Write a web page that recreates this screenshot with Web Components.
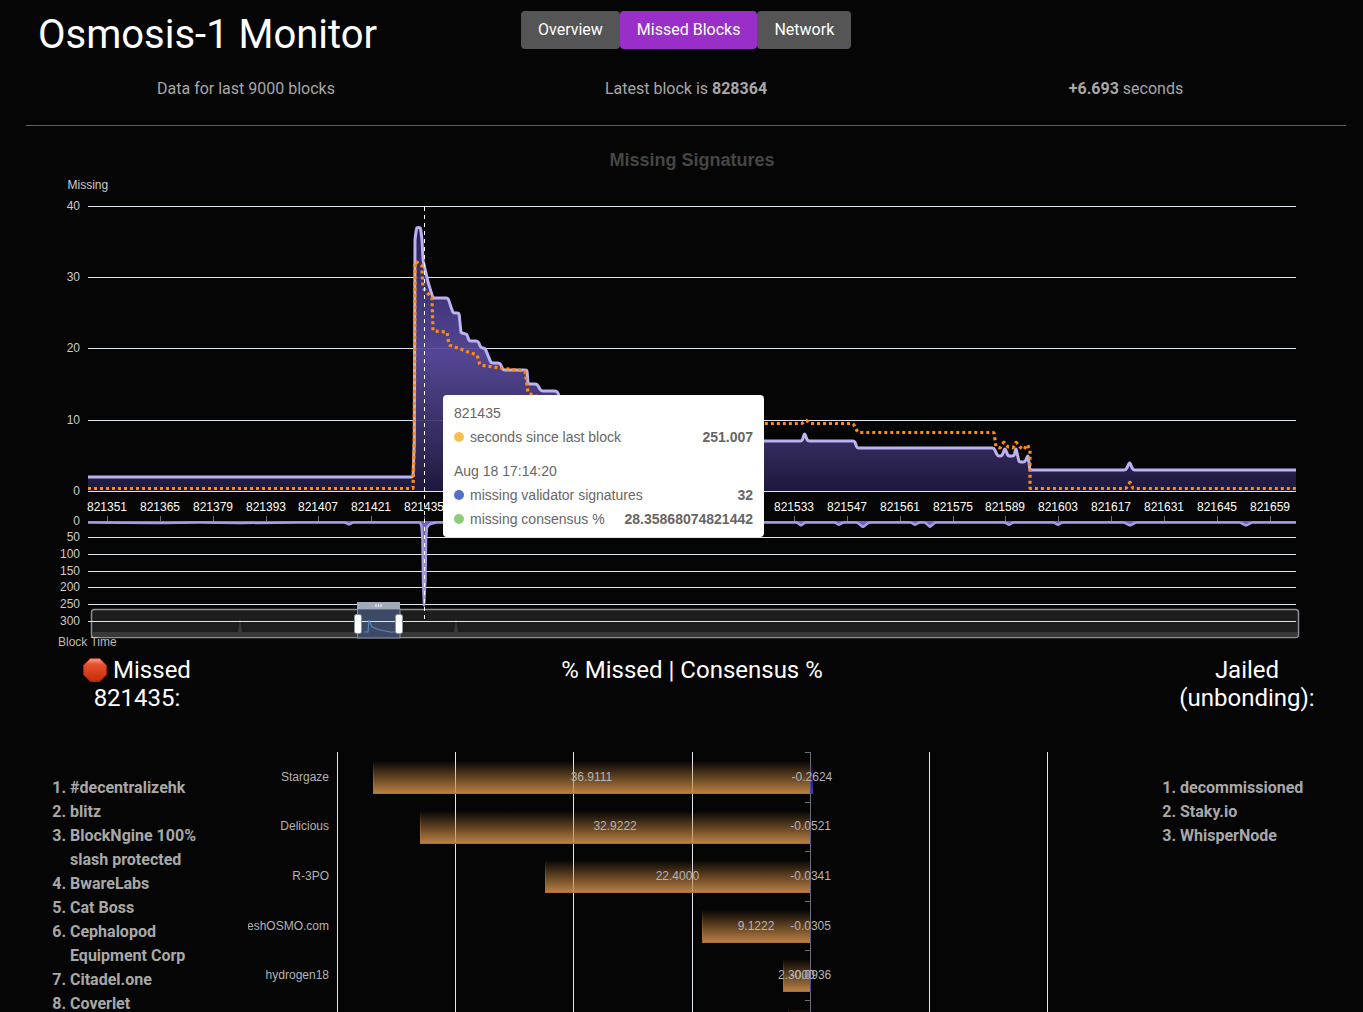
<!DOCTYPE html>
<html>
<head>
<meta charset="utf-8">
<title>Osmosis-1 Monitor</title>
<style>
    html, body { margin: 0; height: 100%; overflow: hidden; background: #050505; }
    body { font-family: Roboto, "Liberation Sans", sans-serif; }
</style>
</head>
<body>
<monitor-header heading="Osmosis-1 Monitor">
    <tab-button>Overview</tab-button>
    <tab-button active>Missed Blocks</tab-button>
    <tab-button>Network</tab-button>
</monitor-header>
<stat-row>
    <span>Data for last 9000 blocks</span>
    <span>Latest block is <b>828364</b></span>
    <span><b>+6.693</b> seconds</span>
</stat-row>
<signature-chart>
    <chart-tooltip>
        <div class="head">821435</div>
        <tip-row color="#f6c04f" value="251.007">seconds since last block</tip-row>
        <div class="head second">Aug 18 17:14:20</div>
        <tip-row color="#5470c6" value="32">missing validator signatures</tip-row>
        <tip-row color="#91cc75" value="28.35868074821442">missing consensus %</tip-row>
    </chart-tooltip>
</signature-chart>
<missed-panel>
    <column-heading slot="left"><stop-icon></stop-icon> Missed 821435:</column-heading>
    <validator-list slot="left" indent="44" names="#decentralizehk|blitz|BlockNgine 100% slash protected|BwareLabs|Cat Boss|Cephalopod Equipment Corp|Citadel.one|Coverlet"></validator-list>
    <column-heading slot="middle">% Missed | Consensus %</column-heading>
    <consensus-bars slot="middle"></consensus-bars>
    <column-heading slot="right">Jailed (unbonding):</column-heading>
    <validator-list slot="right" indent="32" names="decommissioned|Staky.io|WhisperNode"></validator-list>
</missed-panel>

<script>
const SVG_FONT = '"Liberation Sans", Arial, sans-serif';

function roundPath(pts, r = 2) {
    let d = `M${pts[0][0]} ${pts[0][1]}`;
    for (let i = 1; i < pts.length - 1; i++) {
        const [x, y] = pts[i];
        const [px, py] = pts[i - 1];
        const [nx, ny] = pts[i + 1];
        const l1 = Math.hypot(x - px, y - py) || 1;
        const l2 = Math.hypot(nx - x, ny - y) || 1;
        const a = Math.min(r, l1 / 2), b = Math.min(r, l2 / 2);
        d += `L${(x - (x - px) * a / l1).toFixed(1)} ${(y - (y - py) * a / l1).toFixed(1)}`;
        d += `Q${x} ${y} ${(x + (nx - x) * b / l2).toFixed(1)} ${(y + (ny - y) * b / l2).toFixed(1)}`;
    }
    const last = pts[pts.length - 1];
    return d + `L${last[0]} ${last[1]}`;
}

class MonitorHeader extends HTMLElement {
    connectedCallback() {
        this.attachShadow({ mode: 'open' });
        this.shadowRoot.innerHTML = `
            <style>
                :host { display: flex; height: 60px; padding-left: 38px; box-sizing: border-box; }
                h1 { flex: 0 0 483px; margin: 0; font: 400 40px/70px Roboto, sans-serif; color: #fff; }
                div { display: flex; padding-top: 11px; height: 38px; }
            </style>
            <h1>${this.getAttribute("heading")}</h1>
            <div><slot></slot></div>
        `;
    }
}
customElements.define('monitor-header', MonitorHeader);

class TabButton extends HTMLElement {
    connectedCallback() {
        this.attachShadow({ mode: 'open' });
        this.shadowRoot.innerHTML = `
            <style>
                :host {
                    display: block; height: 38px; padding: 0 17px; border-radius: 4px;
                    background: #555; color: #fff;
                    font: 400 16px/38px Roboto, sans-serif;
                }
                :host([active]) { background: #9a2ec8; }
            </style>
            <slot></slot>
        `;
    }
}
customElements.define('tab-button', TabButton);

class StatRow extends HTMLElement {
    connectedCallback() {
        this.attachShadow({ mode: 'open' });
        this.shadowRoot.innerHTML = `
            <style>
                :host {
                    display: grid; grid-template-columns: repeat(3, 1fr); text-align: center;
                    margin: 0 17px 0 26px; height: 66px; padding-top: 17px; box-sizing: border-box;
                    border-bottom: 1px solid #8f38b4;
                    color: #a8a8a8; font: 400 16px/24px Roboto, sans-serif;
                }
                ::slotted(*) { display: block; }
            </style>
            <slot></slot>
        `;
    }
}
customElements.define('stat-row', StatRow);

class ChartTooltip extends HTMLElement {
    connectedCallback() {
        this.attachShadow({ mode: 'open' });
        this.shadowRoot.innerHTML = `
            <style>
                :host {
                    position: absolute; left: 443px; top: 269px; width: 321px; height: 142px;
                    box-sizing: border-box; padding: 9px 11px; background: #fff; border-radius: 4px;
                    color: #666; font: 14px/18px "Liberation Sans", Arial, sans-serif;
                }
                ::slotted(.head) { display: block; height: 18px; margin-bottom: 6px; }
                ::slotted(.second) { margin-top: 16px; }
            </style>
            <slot></slot>
        `;
    }
}
customElements.define('chart-tooltip', ChartTooltip);

class TipRow extends HTMLElement {
    connectedCallback() {
        this.attachShadow({ mode: 'open' });
        this.shadowRoot.innerHTML = `
            <style>
                :host { display: flex; align-items: center; height: 18px; margin-bottom: 6px; }
                i { width: 10px; height: 10px; border-radius: 50%; margin-right: 6px; background: ${this.getAttribute("color")}; }
                b { margin-left: auto; }
            </style>
            <i></i><slot></slot><b>${this.getAttribute("value")}</b>
        `;
    }
}
customElements.define('tip-row', TipRow);

class SignatureChart extends HTMLElement {
    connectedCallback() {
        const left = [[88, 477], [413, 477], [414.3, 440], [415, 240], [416.5, 227.5], [420.5, 227.5], [422, 240], [423, 260], [428, 282],
            [433, 298], [448, 298], [453, 313], [459, 313], [461, 333], [467, 334], [469, 341], [478, 341], [481, 348], [485, 348],
            [491, 363], [500, 363], [503, 370], [527, 370], [528, 384], [537, 384], [541, 391], [557, 391], [560, 398],
            [620, 420], [764, 441], [802, 441], [804.6, 433], [807.5, 441], [854.6, 441], [857, 448], [994, 448], [997.5, 456],
            [1002, 456], [1005, 448], [1008, 456], [1014, 456], [1016, 448], [1019, 462], [1025, 462], [1028, 455], [1030, 470],
            [1126, 470], [1129.6, 462], [1133, 470], [1296, 470]];
        const dots = [[88, 488.5], [413, 488.5], [414.3, 440], [415, 261], [421.7, 265], [423, 288], [432, 298], [433, 331], [447, 332],
            [449, 345], [477, 355], [480, 365], [500, 368], [525, 371], [528, 393], [600, 420], [764, 423.5], [802, 423.5], [806, 420],
            [810, 423.5], [853, 423.5], [858, 432.5], [994, 432.5], [996, 447], [1000, 448], [1004, 442], [1008, 447], [1013, 448],
            [1016, 442], [1020, 447], [1024, 450], [1027, 444], [1030, 450], [1030, 488.5], [1126, 488.5], [1130, 482], [1133, 488.5], [1296, 488.5]];
        const low = [[88, 522.5], [160, 523], [200, 522.5], [240, 523], [300, 522.5], [345, 522.5], [349, 524.5], [353, 522.5], [400, 522.5], [420, 522.5],
            [421.5, 526], [422.5, 540], [423, 580], [424, 606], [425.5, 580], [426, 540], [427, 527], [430, 524], [436, 522.5],
            [797, 522.5], [801, 525.5], [805, 522.5], [835, 522.5], [839, 525], [843, 522.5], [857, 522.5], [863, 527], [869, 522.5],
            [911, 522.5], [915, 525], [919, 522.5], [925, 522.5], [930, 527], [935, 522.5], [1005, 522.5], [1009, 525], [1013, 522.5],
            [1054, 522.5], [1058, 525], [1062, 522.5], [1124, 522.5], [1130, 525.5], [1136, 522.5], [1240, 522.5], [1246, 525.5], [1252, 522.5], [1296, 522.5]];

        const mainGrid = [[40, 206], [30, 277], [20, 348], [10, 420], [0, 491]];
        const lowGrid = [[0, 521], [50, 537], [100, 554], [150, 571], [200, 587], [250, 604], [300, 621]];

        const line = (y) => `<line x1="88" x2="1296" y1="${y + .5}" y2="${y + .5}" stroke="#e0e6f1"/>`;
        const yLabel = (v, y) => `<text x="80" y="${y + 4}" text-anchor="end" fill="#ccc">${v}</text>`;

        let axis = "";
        for (let i = 0; i < 23; i++) {
            const x = Math.round(107 + 52.85 * i) + .5;
            axis += `<line x1="${x}" x2="${x}" y1="516" y2="522" stroke="#6e7079"/>`;
            // the ones between 7 and 12 sit under the tooltip
            if (i <= 6 || i >= 13) {
                axis += `<text x="${x - .5}" y="511" text-anchor="middle" fill="#fff">${821351 + 14 * i}</text>`;
            }
        }

        this.attachShadow({ mode: 'open' });
        this.shadowRoot.innerHTML = `
            <style>
                :host { display: block; position: relative; height: 530px; }
                svg { display: block; font: 12px ${SVG_FONT}; }
            </style>
            <svg width="1363" height="530" viewBox="0 126 1363 530">
                <defs>
                    <linearGradient id="area" gradientUnits="userSpaceOnUse" x1="0" x2="0" y1="227" y2="491">
                        <stop offset="0" stop-color="#2d2560"/>
                        <stop offset="0.48" stop-color="#5a4ba0"/>
                        <stop offset="0.8" stop-color="#3a3068"/>
                        <stop offset="1" stop-color="#1f1a42"/>
                    </linearGradient>
                </defs>
                <text x="692" y="166" text-anchor="middle" fill="#464646" style="font-size:18px;font-weight:700">Missing Signatures</text>
                <text x="67.5" y="189" fill="#ccc">Missing</text>

                <rect x="91.5" y="609.5" width="1207" height="28" rx="3" fill="#1e1e1e" stroke="#8a8f98" stroke-width="1.5"/>
                <rect x="93" y="632" width="1204" height="5" fill="#393939"/>
                <path d="M238 632L240 618L242 632ZM454 632L456 618L458 632Z" fill="#393939"/>
                <rect x="357.5" y="609" width="42.5" height="29" fill="#3d4a66" stroke="#8a94a8"/>

                ${mainGrid.map(([v, y]) => line(y) + yLabel(v, y)).join("")}
                ${lowGrid.map(([v, y]) => (v ? line(y) : "") + yLabel(v, y)).join("")}
                <path d="${roundPath(left)}L1296 491L88 491Z" fill="url(#area)" fill-opacity=".92"/>
                <line x1="88" x2="1296" y1="491.5" y2="491.5" stroke="#e0e6f1"/>
                <path d="${roundPath(left)}" fill="none" stroke="#bbb2f0" stroke-width="3"/>
                <path d="${roundPath(dots, 1)}" fill="none" stroke="#ff8c0f" stroke-width="3.2" stroke-dasharray="3 3"/>
                ${axis}
                <path d="${roundPath(low, 1)}L1296 521L88 521Z" fill="#6f60c4"/>
                <path d="${roundPath(low, 1)}" fill="none" stroke="#a79de6" stroke-width="2.5"/>
                <line x1="424.5" x2="424.5" y1="207" y2="621" stroke="#fff" stroke-dasharray="4 4"/>

                <rect x="357" y="602" width="43" height="7" fill="#a0aabb"/>
                <path d="M376 604v3M378.5 604v3M381 604v3" stroke="#fff"/>
                <path d="M364 632H368L369 620L372 627L380 630L390 632H395" fill="none" stroke="#5f84b8" stroke-width="1.2"/>
                <rect x="354.5" y="614.5" width="7" height="19" rx="2" fill="#fff" stroke="#8a94a6"/>
                <rect x="395.5" y="614.5" width="7" height="19" rx="2" fill="#fff" stroke="#8a94a6"/>
                <text x="58" y="646" fill="#bbb">Block Time</text>
            </svg>
            <slot></slot>
        `;
    }
}
customElements.define('signature-chart', SignatureChart);

class MissedPanel extends HTMLElement {
    connectedCallback() {
        this.attachShadow({ mode: 'open' });
        this.shadowRoot.innerHTML = `
            <style>
                :host { display: grid; grid-template-columns: 222px 888px 210px; margin-left: 26px; width: 1320px; }
                .right { padding-left: 12px; }
            </style>
            <div><slot name="left"></slot></div>
            <div><slot name="middle"></slot></div>
            <div class="right"><slot name="right"></slot></div>
        `;
    }
}
customElements.define('missed-panel', MissedPanel);

class ColumnHeading extends HTMLElement {
    connectedCallback() {
        this.attachShadow({ mode: 'open' });
        this.shadowRoot.innerHTML = `
            <style>
                :host {
                    display: block; height: 96px; text-align: center; color: #fff;
                    font: 400 24px/28px Roboto, sans-serif; padding: 0 30px; box-sizing: border-box;
                }
            </style>
            <slot></slot>
        `;
    }
}
customElements.define('column-heading', ColumnHeading);

class StopIcon extends HTMLElement {
    connectedCallback() {
        this.attachShadow({ mode: 'open' });
        this.shadowRoot.innerHTML = `
            <style>
                :host { display: inline-block; width: 24px; height: 24px; vertical-align: -4px; }
                svg { display: block; }
            </style>
            <svg width="24" height="24" viewBox="0 0 24 24">
                <defs>
                    <linearGradient id="stop" x1="0" x2="0" y1="0" y2="1">
                        <stop offset="0" stop-color="#f0a898"/>
                        <stop offset="0.25" stop-color="#e8502e"/>
                        <stop offset="1" stop-color="#c42c08"/>
                    </linearGradient>
                </defs>
                <path d="M7.2 0.6H16.8L23.4 7.2V16.8L16.8 23.4H7.2L0.6 16.8V7.2Z" fill="url(#stop)" stroke="#b52a08" stroke-width=".8"/>
            </svg>
        `;
    }
}
customElements.define('stop-icon', StopIcon);

class ValidatorList extends HTMLElement {
    connectedCallback() {
        const names = this.getAttribute("names").split("|");
        this.attachShadow({ mode: 'open' });
        this.shadowRoot.innerHTML = `
            <style>
                :host { display: block; padding-top: 24px; }
                ol { margin: 0; padding: 0 20px 0 ${this.getAttribute("indent")}px; color: #a8a8a8; font: 700 16px/24px Roboto, sans-serif; }
            </style>
            <ol>${names.map(n => `<li>${n}</li>`).join("")}</ol>
        `;
    }
}
customElements.define('validator-list', ValidatorList);

class ConsensusBars extends HTMLElement {
    connectedCallback() {
        const rows = [["Stargaze", 36.9111, -0.2624], ["Delicious", 32.9222, -0.0521], ["R-3PO", 22.4, -0.0341],
            ["eshOSMO.com", 9.1222, -0.0305], ["hydrogen18", 2.3, -0.0936], ["", 1.86, 0]];
        const zero = 810, scale = 11.84;
        let bars = "";
        rows.forEach(([name, pct, cons], i) => {
            const top = 752 + 49.6 * i;
            const w = pct * scale, n = -cons * scale;
            const base = Math.round(top + 28.8);
            const y = Math.round(top + 9);
            bars += `<rect x="${Math.round(zero - w)}" y="${y}" width="${Math.round(w)}" height="33" fill="url(#bar)"/>`;
            bars += `<rect x="${zero}" y="${y}" width="${n}" height="33" fill="url(#neg)"/>`;
            bars += `<rect x="${Math.round(zero - w)}" y="${y}" width="1" height="33" fill="url(#edge)"/>`;
            bars += `<rect x="${Math.round(zero - w)}" y="${y + 32}" width="${Math.round(w)}" height="1" fill="#ab7034"/>`;
            bars += `<line x1="805" x2="810" y1="${Math.round(top) + .5}" y2="${Math.round(top) + .5}" stroke="#6e7079"/>`;
            if (name) {
                bars += `<text x="329" y="${base}" text-anchor="end">${name}</text>`;
                bars += `<text x="${zero - w / 2}" y="${base}" text-anchor="middle">${pct.toFixed(4)}</text>`;
                bars += `<text x="${zero + 0.4 + n / 2}" y="${base}" text-anchor="middle">${cons.toFixed(4)}</text>`;
            }
        });
        const grid = [337, 455, 573, 692, 929, 1047]
            .map(x => `<line x1="${x + .5}" x2="${x + .5}" y1="752" y2="1012" stroke="#e0e6f1"/>`).join("");

        this.attachShadow({ mode: 'open' });
        this.shadowRoot.innerHTML = `
            <style>
                :host { display: block; width: 888px; height: 260px; overflow: hidden; }
                svg { display: block; font: 12px ${SVG_FONT}; fill: #b4b4b4; }
            </style>
            <svg width="888" height="260" viewBox="248 752 888 260">
                <defs>
                    <linearGradient id="bar" x1="0" x2="0" y1="0" y2="1">
                        <stop offset="0" stop-color="#c8873f" stop-opacity="0"/>
                        <stop offset="1" stop-color="#c98a48" stop-opacity=".95"/>
                    </linearGradient>
                    <linearGradient id="edge" x1="0" x2="0" y1="0" y2="1">
                        <stop offset="0" stop-color="#ab7034" stop-opacity="0"/>
                        <stop offset="1" stop-color="#ab7034"/>
                    </linearGradient>
                    <linearGradient id="neg" x1="0" x2="0" y1="0" y2="1">
                        <stop offset="0" stop-color="#4a3aa8" stop-opacity="0"/>
                        <stop offset="1" stop-color="#4a3aa8"/>
                    </linearGradient>
                </defs>
                ${grid}
                <line x1="810.5" x2="810.5" y1="752" y2="1012" stroke="#6e7079"/>
                ${bars}
            </svg>
        `;
    }
}
customElements.define('consensus-bars', ConsensusBars);
</script>
</body>
</html>
